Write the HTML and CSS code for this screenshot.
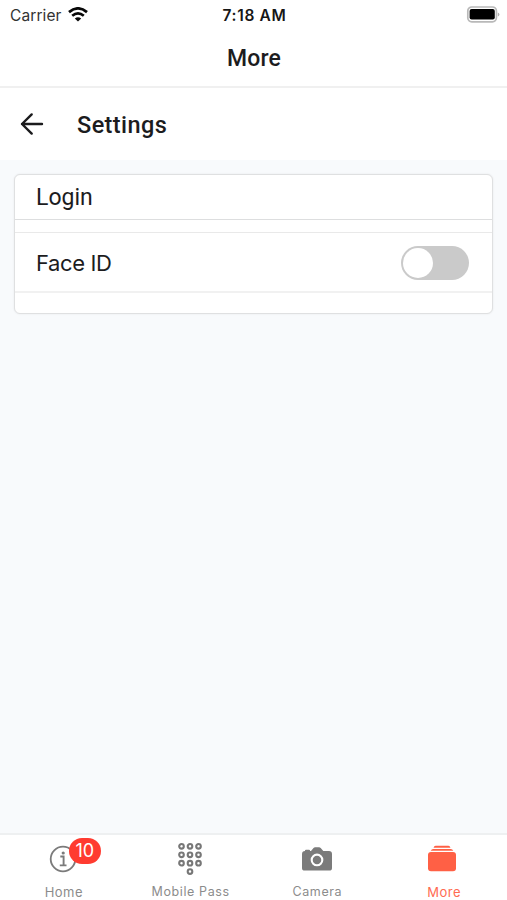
FILE: index.html
```html
<!DOCTYPE html>
<html lang="en">
<head>
<meta charset="utf-8">
<title>Settings</title>
<link rel="stylesheet" href="styles.css">
</head>
<body>
<div class="screen">
  <header class="top">
    <div class="status">
      <div class="carrier"><span>Carrier</span>
        <svg class="wifi" width="20" height="15" viewBox="0 0 20 15" fill="none" stroke="#080808" stroke-width="2.7"><path d="M1 5.1Q10-2.4 19 5.1M4.2 8.7q5.8-4.8 11.6 0"/><path d="M10 14.5 6.8 11.500q3.200-2.500 6.400 0z" fill="#080808" stroke="none"/></svg>
      </div>
      <time class="clock">7:18 AM</time>
      <svg class="battery" width="34" height="17" viewBox="0 0 34 17"><rect x="1.8" y="1" width="28.6" height="14.8" rx="4" fill="#fff" stroke="#b9b9b9" stroke-width="1.7"/><rect x="3.6" y="3" width="25.2" height="10.6" rx="2" fill="#000"/><path d="M31.8 6.4q1.6.4 1.6 2t-1.6 2z" fill="#b0b0b0"/></svg>
    </div>
    <h1 class="title">More</h1>
  </header>
  <div class="subhead">
    <svg class="back" width="24" height="24" viewBox="0 0 24 24" fill="none" stroke="#1b1b1d" stroke-width="2.4" stroke-linecap="round" stroke-linejoin="round"><path d="M22 12H2M11.7 2.4 2 12l9.7 9.6"/></svg>
    <h2 class="heading">Settings</h2>
  </div>
  <main class="content">
    <section class="card">
      <div class="card-title"><span>Login</span></div>
      <div class="row"><span class="label">Face ID</span><span class="switch" role="switch" aria-checked="false"><span class="knob"></span></span></div>
    </section>
  </main>
  <nav class="tabs">
    <a class="tab"><span class="icon">
      <svg width="28" height="28" viewBox="0 0 28 28" fill="none" stroke="#7b7b7b"><circle cx="14" cy="14" r="12.3" stroke-width="1.8"/><path d="M11.3 11.5h3.3v8.7M10.8 20.4h6.7" stroke-width="1.9"/><circle cx="14.2" cy="8" r="1.6" fill="#7b7b7b" stroke="none"/></svg>
      <span class="badge">10</span></span><span class="name home">Home</span></a>
    <a class="tab"><span class="icon">
      <svg class="keypad" width="26" height="34" viewBox="0 0 26 34" fill="none" stroke="#777" stroke-width="2.1"><circle cx="4.5" cy="4.3" r="2.3"/><circle cx="13" cy="4.3" r="2.3"/><circle cx="21.5" cy="4.3" r="2.3"/><circle cx="4.5" cy="12.8" r="2.3"/><circle cx="13" cy="12.8" r="2.3"/><circle cx="21.5" cy="12.8" r="2.3"/><circle cx="4.5" cy="21.2" r="2.3"/><circle cx="13" cy="21.2" r="2.3"/><circle cx="21.5" cy="21.2" r="2.3"/><circle cx="13" cy="29.6" r="2.3"/></svg>
      </span><span class="name pass">Mobile Pass</span></a>
    <a class="tab"><span class="icon">
      <svg width="30" height="24" viewBox="0 0 30 24"><path d="M3 4.1V3.6Q3 2.7 4 2.7h3q1 0 1 .9v.5h1L11.5 1q.7-.8 1.6-.8h4q.9 0 1.6.8l2.6 3.1H27q3 0 3 3V21q0 2.6-2.7 2.6H2.7Q0 23.6 0 21V7q0-2.9 3-2.9z" fill="#7b7b7b"/><circle cx="15" cy="12.9" r="5.3" fill="#7b7b7b" stroke="#fff" stroke-width="2.1"/></svg>
      </span><span class="name camera">Camera</span></a>
    <a class="tab active"><span class="icon">
      <svg class="stack" width="28" height="27" viewBox="0 0 28 27" fill="#ff6045"><rect y="7" width="28" height="19.3" rx="3"/><path d="M2.7 5.8Q3.5 3.9 5.2 3.9h17.6q1.7 0 2.5 1.9z"/><path d="M5.5 2.8Q6.1.7 7.600.7h12.800q1.500 0 2.100 2.100z"/></svg>
      </span><span class="name more">More</span></a>
  </nav>
</div>
</body>
</html>
```
FILE: styles.css
```css
* { box-sizing: border-box; }
body { margin: 0; background: #f8fafc; color: #1c1c1e; font-family: Inter, "Liberation Sans", sans-serif; }
h1, h2 { margin: 0; font-weight: 500; font-family: Roboto, "Liberation Sans", sans-serif; }
svg { display: block; }
.screen { height: 900px; display: flex; flex-direction: column; }
.top { height: 88px; background: #fff; border-bottom: 2px solid #f0f0f0; }
.status { height: 30px; display: grid; grid-template-columns: 1fr auto 1fr; align-items: center; padding: 0 8px 0 10px; }
.carrier { display: flex; align-items: center; gap: 6px; font-size: 15.5px; letter-spacing: .1px; color: #333; }
.wifi { margin-bottom: 1px; }
.clock { font-size: 15.5px; font-weight: 600; letter-spacing: .65px; color: #161616; }
.battery { justify-self: end; margin: 0 -1px 2px 0; }
.title { text-align: center; font-size: 23px; line-height: 57px; letter-spacing: .2px; padding-left: 1px; }
.subhead { height: 72px; background: #fff; display: flex; align-items: center; padding-left: 20px; gap: 33px; }
.heading { font-size: 23.5px; line-height: 30px; letter-spacing: .4px; padding-top: 2px; }
.content { flex: 1; padding: 14px 14px 0; }
.card { height: 140px; background: #fff; border: 1px solid #dfe0e1; border-radius: 6px; box-shadow: 0 0 2px #e5e6e8; }
.card-title { height: 45px; padding-left: 21px; border-bottom: 1px solid #dddedf; font: 23px/46px Roboto, sans-serif; }
.row { height: 61px; margin-top: 12px; padding: 1px 23px 0 21px; display: flex; align-items: center; justify-content: space-between; border-top: 1px solid #e9e9e9; border-bottom: 2px solid #f1f1f1; }
.label { font-size: 22px; letter-spacing: -.4px; padding-top: 1px; }
.switch { width: 68px; height: 34px; padding: 2px; border-radius: 17px; background: #cacaca; }
.knob { display: block; width: 30px; height: 30px; border-radius: 50%; background: #fff; }
.tabs { height: 67px; background: #fff; border-top: 2px solid #eef0f1; display: grid; grid-template-columns: repeat(4, 1fr); }
.tab { display: flex; flex-direction: column; align-items: center; color: #8c8c8c; }
.icon { position: relative; height: 48px; display: flex; align-items: center; }
.keypad { margin-right: 1px; }
.stack { margin: 0 3px 1px 0; }
.badge { position: absolute; left: 19.5px; top: 3px; width: 32px; height: 26px; border-radius: 13px; background: #ff3b30; color: #fff; font-size: 18px; line-height: 26px; text-align: center; }
.name { font-size: 12.5px; line-height: 18px; letter-spacing: .6px; padding-left: 1px; }
.home, .more { font-size: 13px; letter-spacing: .5px; }
.active { color: #ff6b52; }
```
